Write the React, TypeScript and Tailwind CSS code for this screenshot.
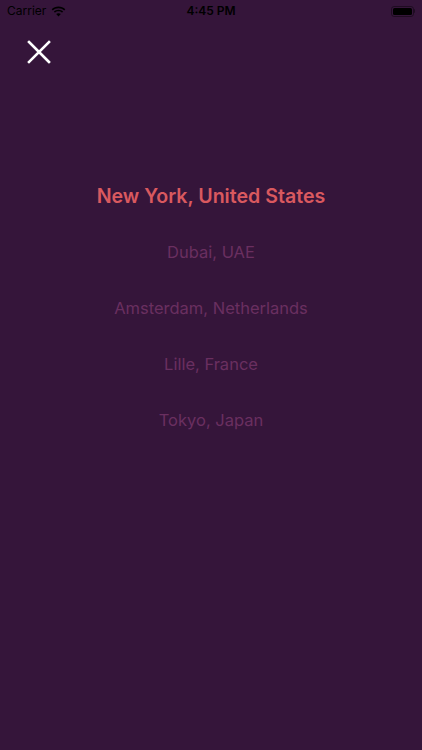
const CITIES = ["Dubai, UAE", "Amsterdam, Netherlands", "Lille, France", "Tokyo, Japan"];

function StatusBar() {
  return (
    <div className="relative flex h-[22px] items-center px-[7px] text-[12px] text-black">
      <div className="flex items-center gap-[5px]">
        <span>Carrier</span>
        <svg width="15" height="11" viewBox="0 0 15 11" fill="black">
          <path d="M7.5 2.2c2.2 0 4.2.9 5.7 2.3l1.1-1.2C12.5 1.6 10.1.6 7.5.6S2.5 1.6.7 3.3l1.1 1.2C3.3 3.1 5.3 2.2 7.5 2.2z" />
          <path d="M7.5 5.3c1.4 0 2.6.5 3.5 1.4l1.1-1.2C10.9 4.4 9.3 3.7 7.5 3.7S4.1 4.4 2.9 5.5L4 6.7c.9-.9 2.1-1.4 3.5-1.4z" />
          <path d="M7.5 10.6l2.3-2.5c-.6-.6-1.4-.9-2.3-.9s-1.7.3-2.3.9z" />
        </svg>
      </div>
      <span className="absolute left-1/2 -translate-x-1/2 font-semibold">4:45 PM</span>
      <div className="ml-auto flex items-center">
        <div className="flex h-[11px] w-[23px] items-center rounded-[3px] border border-black/40 p-[1px]">
          <div className="h-full w-full rounded-[1.5px] bg-black" />
        </div>
        <div className="h-[4px] w-[1.5px] rounded-r bg-black/40" />
      </div>
    </div>
  );
}

export default function App() {
  return (
    <div
      className="flex h-[750px] w-[422px] flex-col bg-[#35153a]"
      style={{ fontFamily: "Inter, 'Liberation Sans', sans-serif" }}
    >
      <StatusBar />
      <div className="pl-[27px] pt-[18px]">
        <svg width="24" height="24" viewBox="0 0 24 24" stroke="white" strokeWidth="2.6" strokeLinecap="square">
          <path d="M2 2L22 22M22 2L2 22" />
        </svg>
      </div>
      <div className="mt-[118px] flex flex-col items-center">
        <div className="text-[19.6px] font-semibold leading-[28px] text-[#d9595f]">New York, United States</div>
        <div className="mt-[28px] flex flex-col items-center gap-[28px]">
          {CITIES.map((c) => (
            <div key={c} className="text-[16.5px] leading-[28px] text-[#6a2f60]">
              {c}
            </div>
          ))}
        </div>
      </div>
    </div>
  );
}
